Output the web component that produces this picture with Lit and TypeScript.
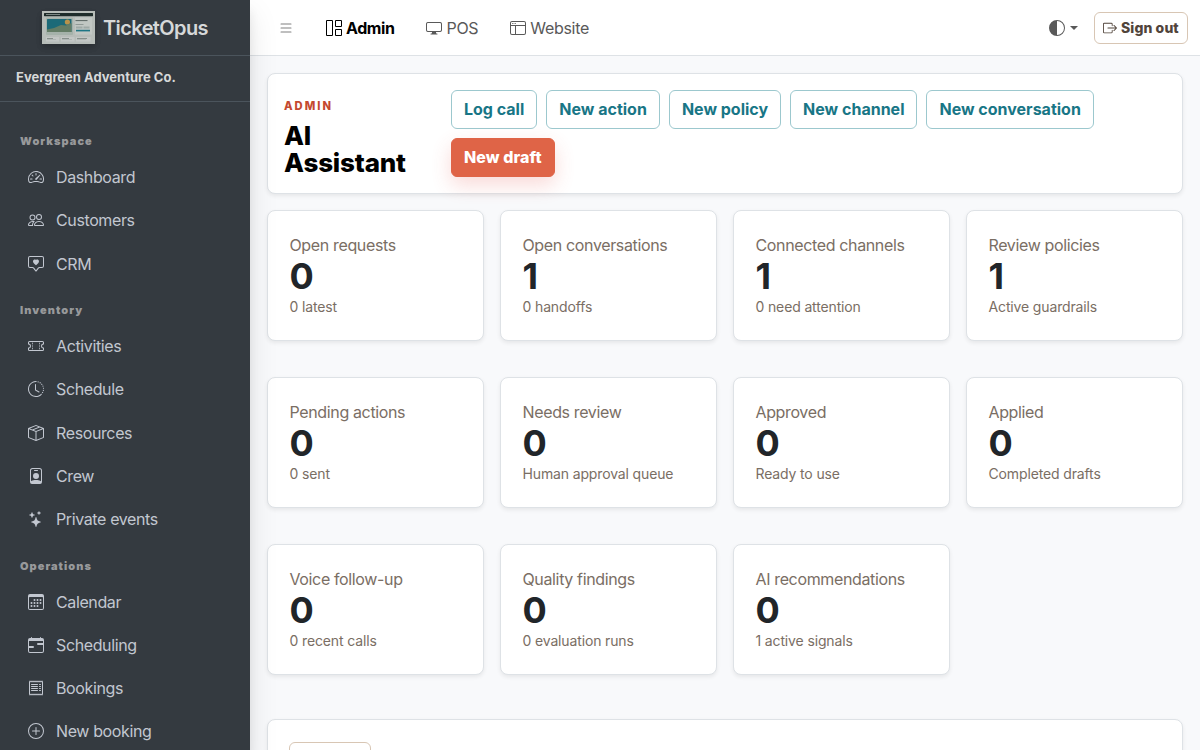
import { LitElement, html, css, svg } from 'lit';
import { customElement, property } from 'lit/decorators.js';

const icons: Record<string, string[]> = {
  speedometer: [
    'M8 4a.5.5 0 0 1 .5.5V6a.5.5 0 0 1-1 0V4.5A.5.5 0 0 1 8 4M3.732 5.732a.5.5 0 0 1 .707 0l.915.914a.5.5 0 1 1-.708.708l-.914-.915a.5.5 0 0 1 0-.707M2 10a.5.5 0 0 1 .5-.5h1.586a.5.5 0 0 1 0 1H2.5A.5.5 0 0 1 2 10m9.5 0a.5.5 0 0 1 .5-.5h1.5a.5.5 0 0 1 0 1H12a.5.5 0 0 1-.5-.5m.754-4.246a.39.39 0 0 0-.527-.02L7.547 9.31a.91.91 0 1 0 1.302 1.258l3.434-4.297a.39.39 0 0 0-.029-.518z',
    'M0 10a8 8 0 1 1 15.547 2.661c-.442 1.253-1.845 1.602-2.932 1.25C11.309 13.488 9.475 13 8 13c-1.474 0-3.31.488-4.615.911-1.087.352-2.49.003-2.932-1.25A8 8 0 0 1 0 10m8-7a7 7 0 0 0-6.603 9.329c.203.575.923.876 1.68.63C4.397 12.533 6.358 12 8 12s3.604.532 4.923.96c.757.245 1.477-.056 1.68-.631A7 7 0 0 0 8 3',
  ],
  people: [
    'M15 14s1 0 1-1-1-4-5-4-5 3-5 4 1 1 1 1zm-7.978-1L7 12.996c.001-.264.167-1.03.76-1.72C8.312 10.629 9.282 10 11 10c1.717 0 2.687.63 3.24 1.276.593.69.758 1.457.76 1.72l-.008.002-.014.002zM11 7a2 2 0 1 0 0-4 2 2 0 0 0 0 4m3-2a3 3 0 1 1-6 0 3 3 0 0 1 6 0M6.936 9.28a6 6 0 0 0-1.23-.247A7 7 0 0 0 5 9c-4 0-5 3-5 4q0 1 1 1h4.216A2.24 2.24 0 0 1 5 13c0-1.01.377-2.042 1.09-2.904.243-.294.526-.569.846-.816M4.92 10A5.5 5.5 0 0 0 4 13H1c0-.26.164-1.03.76-1.724.545-.636 1.492-1.256 3.16-1.275ZM1.5 5.5a3 3 0 1 1 6 0 3 3 0 0 1-6 0m3-2a2 2 0 1 0 0 4 2 2 0 0 0 0-4',
  ],
  chatHeart: [
    'M14 1a1 1 0 0 1 1 1v8a1 1 0 0 1-1 1h-2.5a2 2 0 0 0-1.6.8L8 14.333 6.1 11.8a2 2 0 0 0-1.6-.8H2a1 1 0 0 1-1-1V2a1 1 0 0 1 1-1zM2 0a2 2 0 0 0-2 2v8a2 2 0 0 0 2 2h2.5a1 1 0 0 1 .8.4l1.9 2.533a1 1 0 0 0 1.6 0l1.9-2.533a1 1 0 0 1 .8-.4H14a2 2 0 0 0 2-2V2a2 2 0 0 0-2-2z',
    'M8 3.993c1.664-1.711 5.825 1.283 0 5.132-5.825-3.85-1.664-6.843 0-5.132',
  ],
  ticket: [
    'M4 4.85v.9h1v-.9zm7 0v.9h1v-.9zm-7 1.8v.9h1v-.9zm7 0v.9h1v-.9zm-7 1.8v.9h1v-.9zm7 0v.9h1v-.9zm-7 1.8v.9h1v-.9zm7 0v.9h1v-.9z',
    'M1.5 3A1.5 1.5 0 0 0 0 4.5V6a.5.5 0 0 0 .5.5 1.5 1.5 0 1 1 0 3 .5.5 0 0 0-.5.5v1.5A1.5 1.5 0 0 0 1.5 13h13a1.5 1.5 0 0 0 1.5-1.5V10a.5.5 0 0 0-.5-.5 1.5 1.5 0 0 1 0-3A.5.5 0 0 0 16 6V4.5A1.5 1.5 0 0 0 14.5 3zM1 4.5a.5.5 0 0 1 .5-.5h13a.5.5 0 0 1 .5.5v1.05a2.5 2.5 0 0 0 0 4.9v1.05a.5.5 0 0 1-.5.5h-13a.5.5 0 0 1-.5-.5v-1.05a2.5 2.5 0 0 0 0-4.9z',
  ],
  clock: [
    'M8.515 1.019A7 7 0 0 0 8 1V0a8 8 0 0 1 .589.022zm2.004.45a7 7 0 0 0-.985-.299l.219-.976q.576.129 1.126.342zm1.37.71a7 7 0 0 0-.439-.27l.493-.87a8 8 0 0 1 .979.654l-.615.789a7 7 0 0 0-.418-.302zm1.834 1.79a7 7 0 0 0-.653-.796l.724-.69q.406.429.747.91zm.744 1.352a7 7 0 0 0-.214-.468l.893-.45a8 8 0 0 1 .45 1.088l-.95.313a7 7 0 0 0-.179-.483m.53 2.507a7 7 0 0 0-.1-1.025l.985-.17q.1.58.116 1.17zm-.131 1.538q.05-.254.081-.51l.993.123a8 8 0 0 1-.23 1.155l-.964-.267q.069-.247.12-.501m-.952 2.379q.276-.436.486-.908l.914.405q-.24.54-.555 1.038zm-.964 1.205q.183-.183.35-.378l.758.653a8 8 0 0 1-.401.432z',
    'M8 1a7 7 0 1 0 4.95 11.95l.707.707A8.001 8.001 0 1 1 8 0z',
    'M7.5 3a.5.5 0 0 1 .5.5v5.21l3.248 1.856a.5.5 0 0 1-.496.868l-3.5-2A.5.5 0 0 1 7 9V3.5a.5.5 0 0 1 .5-.5',
  ],
  box: [
    'M8.186 1.113a.5.5 0 0 0-.372 0L1.846 3.5l2.404.961L10.404 2zm3.564 1.426L5.596 5 8 5.961 14.154 3.5zm3.25 1.7-6.5 2.6v7.922l6.5-2.6V4.24zM7.5 14.762V6.838L1 4.239v7.923zM7.443.184a1.5 1.5 0 0 1 1.114 0l7.129 2.852A.5.5 0 0 1 16 3.5v8.662a1 1 0 0 1-.629.928l-7.185 2.874a.5.5 0 0 1-.372 0L.63 13.09a1 1 0 0 1-.63-.928V3.5a.5.5 0 0 1 .314-.464z',
  ],
  badge: [
    'M6.5 2a.5.5 0 0 0 0 1h3a.5.5 0 0 0 0-1zM11 8a3 3 0 1 1-6 0 3 3 0 0 1 6 0',
    'M4.5 0A2.5 2.5 0 0 0 2 2.5V14a2 2 0 0 0 2 2h8a2 2 0 0 0 2-2V2.5A2.5 2.5 0 0 0 11.5 0zM3 2.5A1.5 1.5 0 0 1 4.5 1h7A1.5 1.5 0 0 1 13 2.5v10.795a4.2 4.2 0 0 0-.776-.492C11.392 12.387 10.063 12 8 12s-3.392.387-4.224.803a4.2 4.2 0 0 0-.776.492z',
  ],
  stars: [
    'M7.657 6.247c.11-.33.576-.33.686 0l.645 1.937a2.89 2.89 0 0 0 1.829 1.828l1.936.645c.33.11.33.576 0 .686l-1.937.645a2.89 2.89 0 0 0-1.828 1.829l-.645 1.936a.361.361 0 0 1-.686 0l-.645-1.937a2.89 2.89 0 0 0-1.828-1.828l-1.937-.645a.361.361 0 0 1 0-.686l1.937-.645a2.89 2.89 0 0 0 1.828-1.828zM3.794 1.148a.217.217 0 0 1 .412 0l.387 1.162c.173.518.579.924 1.097 1.097l1.162.387a.217.217 0 0 1 0 .412l-1.162.387A1.73 1.73 0 0 0 4.593 5.69l-.387 1.162a.217.217 0 0 1-.412 0L3.407 5.69A1.73 1.73 0 0 0 2.31 4.593l-1.162-.387a.217.217 0 0 1 0-.412l1.162-.387A1.73 1.73 0 0 0 3.407 2.31zM10.863.099a.145.145 0 0 1 .274 0l.258.774c.115.346.386.617.732.732l.774.258a.145.145 0 0 1 0 .274l-.774.258a1.16 1.16 0 0 0-.732.732l-.258.774a.145.145 0 0 1-.274 0l-.258-.774a1.16 1.16 0 0 0-.732-.732L9.1 2.137a.145.145 0 0 1 0-.274l.774-.258c.346-.115.617-.386.732-.732z',
  ],
  calendar: [
    'M14 0H2a2 2 0 0 0-2 2v12a2 2 0 0 0 2 2h12a2 2 0 0 0 2-2V2a2 2 0 0 0-2-2M1 3.857C1 3.384 1.448 3 2 3h12c.552 0 1 .384 1 .857v10.286c0 .473-.448.857-1 .857H2c-.552 0-1-.384-1-.857z',
    'M6.5 7a1 1 0 1 0 0-2 1 1 0 0 0 0 2m3 0a1 1 0 1 0 0-2 1 1 0 0 0 0 2m3 0a1 1 0 1 0 0-2 1 1 0 0 0 0 2m-9 3a1 1 0 1 0 0-2 1 1 0 0 0 0 2m3 0a1 1 0 1 0 0-2 1 1 0 0 0 0 2m3 0a1 1 0 1 0 0-2 1 1 0 0 0 0 2m3 0a1 1 0 1 0 0-2 1 1 0 0 0 0 2m-9 3a1 1 0 1 0 0-2 1 1 0 0 0 0 2m3 0a1 1 0 1 0 0-2 1 1 0 0 0 0 2m3 0a1 1 0 1 0 0-2 1 1 0 0 0 0 2',
  ],
  calendarRange: [
    'M9 7a1 1 0 0 1 1-1h5v2h-5a1 1 0 0 1-1-1M1 9h4a1 1 0 0 1 0 2H1z',
    'M3.5 0a.5.5 0 0 1 .5.5V1h8V.5a.5.5 0 0 1 1 0V1h1a2 2 0 0 1 2 2v11a2 2 0 0 1-2 2H2a2 2 0 0 1-2-2V3a2 2 0 0 1 2-2h1V.5a.5.5 0 0 1 .5-.5M1 4v10a1 1 0 0 0 1 1h12a1 1 0 0 0 1-1V4z',
  ],
  receipt: [
    'M1.92.506a.5.5 0 0 1 .434.14L3 1.293l.646-.647a.5.5 0 0 1 .708 0L5 1.293l.646-.647a.5.5 0 0 1 .708 0L7 1.293l.646-.647a.5.5 0 0 1 .708 0L9 1.293l.646-.647a.5.5 0 0 1 .708 0l.646.647.646-.647a.5.5 0 0 1 .708 0l.646.647.646-.647a.5.5 0 0 1 .801.13l.5 1A.5.5 0 0 1 15 2v12a.5.5 0 0 1-.053.224l-.5 1a.5.5 0 0 1-.8.13L13 14.707l-.646.647a.5.5 0 0 1-.708 0L11 14.707l-.646.647a.5.5 0 0 1-.708 0L9 14.707l-.646.647a.5.5 0 0 1-.708 0L7 14.707l-.646.647a.5.5 0 0 1-.708 0L5 14.707l-.646.647a.5.5 0 0 1-.708 0L3 14.707l-.646.647a.5.5 0 0 1-.801-.13l-.5-1A.5.5 0 0 1 1 14V2a.5.5 0 0 1 .053-.224l.5-1a.5.5 0 0 1 .367-.27m.217 1.338L2 2.118v11.764l.137.274.51-.51a.5.5 0 0 1 .707 0l.646.647.646-.646a.5.5 0 0 1 .708 0l.646.646.646-.646a.5.5 0 0 1 .708 0l.646.646.646-.646a.5.5 0 0 1 .708 0l.646.646.646-.646a.5.5 0 0 1 .708 0l.646.646.646-.646a.5.5 0 0 1 .708 0l.509.509.137-.274V2.118l-.137-.274-.51.51a.5.5 0 0 1-.707 0L12 1.707l-.646.647a.5.5 0 0 1-.708 0L10 1.707l-.646.647a.5.5 0 0 1-.708 0L8 1.707l-.646.647a.5.5 0 0 1-.708 0L6 1.707l-.646.647a.5.5 0 0 1-.708 0L4 1.707l-.646.647a.5.5 0 0 1-.708 0z',
    'M3 4.5a.5.5 0 0 1 .5-.5h6a.5.5 0 1 1 0 1h-6a.5.5 0 0 1-.5-.5m0 2a.5.5 0 0 1 .5-.5h6a.5.5 0 1 1 0 1h-6a.5.5 0 0 1-.5-.5m0 2a.5.5 0 0 1 .5-.5h6a.5.5 0 1 1 0 1h-6a.5.5 0 0 1-.5-.5m0 2a.5.5 0 0 1 .5-.5h6a.5.5 0 0 1 0 1h-6a.5.5 0 0 1-.5-.5m8-6a.5.5 0 0 1 .5-.5h1a.5.5 0 0 1 0 1h-1a.5.5 0 0 1-.5-.5m0 2a.5.5 0 0 1 .5-.5h1a.5.5 0 0 1 0 1h-1a.5.5 0 0 1-.5-.5m0 2a.5.5 0 0 1 .5-.5h1a.5.5 0 0 1 0 1h-1a.5.5 0 0 1-.5-.5m0 2a.5.5 0 0 1 .5-.5h1a.5.5 0 0 1 0 1h-1a.5.5 0 0 1-.5-.5',
  ],
  plusCircle: [
    'M8 15A7 7 0 1 1 8 1a7 7 0 0 1 0 14m0 1A8 8 0 1 0 8 0a8 8 0 0 0 0 16',
    'M8 4a.5.5 0 0 1 .5.5v3h3a.5.5 0 0 1 0 1h-3v3a.5.5 0 0 1-1 0v-3h-3a.5.5 0 0 1 0-1h3v-3A.5.5 0 0 1 8 4',
  ],
  list: [
    'M2.5 12a.5.5 0 0 1 .5-.5h10a.5.5 0 0 1 0 1H3a.5.5 0 0 1-.5-.5m0-4a.5.5 0 0 1 .5-.5h10a.5.5 0 0 1 0 1H3a.5.5 0 0 1-.5-.5m0-4a.5.5 0 0 1 .5-.5h10a.5.5 0 0 1 0 1H3a.5.5 0 0 1-.5-.5',
  ],
  grid: [
    'M6 1H1v14h5zm9 0h-5v5h5zm0 9v5h-5v-5zM0 1a1 1 0 0 1 1-1h5a1 1 0 0 1 1 1v14a1 1 0 0 1-1 1H1a1 1 0 0 1-1-1zm9 0a1 1 0 0 1 1-1h5a1 1 0 0 1 1 1v5a1 1 0 0 1-1 1h-5a1 1 0 0 1-1-1zm1 8a1 1 0 0 0-1 1v5a1 1 0 0 0 1 1h5a1 1 0 0 0 1-1v-5a1 1 0 0 0-1-1z',
  ],
  display: [
    'M0 4s0-2 2-2h12s2 0 2 2v6s0 2-2 2h-4q0 1 .25 1.5H11a.5.5 0 0 1 0 1H5a.5.5 0 0 1 0-1h.75Q6 13 6 12H2s-2 0-2-2zm1.398-.855a.76.76 0 0 0-.254.302A1.5 1.5 0 0 0 1 4.01V10c0 .325.078.502.145.602q.105.156.302.254a1.5 1.5 0 0 0 .538.143L2.01 11H14c.325 0 .502-.078.602-.145a.76.76 0 0 0 .254-.302 1.5 1.5 0 0 0 .143-.538L15 9.99V4c0-.325-.078-.502-.145-.602a.76.76 0 0 0-.302-.254A1.5 1.5 0 0 0 13.99 3H2c-.325 0-.502.078-.602.145',
  ],
  window: [
    'M2.5 4a.5.5 0 1 0 0-1 .5.5 0 0 0 0 1m2-.5a.5.5 0 1 1-1 0 .5.5 0 0 1 1 0m1 .5a.5.5 0 1 0 0-1 .5.5 0 0 0 0 1',
    'M2 1a2 2 0 0 0-2 2v10a2 2 0 0 0 2 2h12a2 2 0 0 0 2-2V3a2 2 0 0 0-2-2zm12 1a1 1 0 0 1 1 1v2H1V3a1 1 0 0 1 1-1zM1 13V6h4v8H2a1 1 0 0 1-1-1m5 1V6h9v7a1 1 0 0 1-1 1z',
  ],
  contrast: ['M8 15A7 7 0 1 0 8 1zm0 1A8 8 0 1 1 8 0a8 8 0 0 1 0 16'],
  signOut: [
    'M10 12.5a.5.5 0 0 1-.5.5h-8a.5.5 0 0 1-.5-.5v-9a.5.5 0 0 1 .5-.5h8a.5.5 0 0 1 .5.5v2a.5.5 0 0 0 1 0v-2A1.5 1.5 0 0 0 9.5 2h-8A1.5 1.5 0 0 0 0 3.5v9A1.5 1.5 0 0 0 1.5 14h8a1.5 1.5 0 0 0 1.5-1.5v-2a.5.5 0 0 0-1 0z',
    'M15.854 8.354a.5.5 0 0 0 0-.708l-3-3a.5.5 0 0 0-.708.708L14.293 7.5H5.5a.5.5 0 0 0 0 1h8.793l-2.147 2.146a.5.5 0 0 0 .708.708z',
  ],
};

@customElement('app-icon')
export class Icon extends LitElement {
  @property() name = '';

  static styles = css`
    :host {
      display: inline-flex;
      flex: none;
      width: 16px;
      height: 16px;
    }

    svg {
      width: 100%;
      height: 100%;
      fill: currentColor;
    }
  `;

  render() {
    const paths = icons[this.name] ?? [];
    return html`
      <svg viewBox="0 0 16 16" aria-hidden="true">
        ${paths.map((d) => svg`<path fill-rule="evenodd" d=${d}></path>`)}
      </svg>
    `;
  }
}

@customElement('app-sidebar')
export class Sidebar extends LitElement {
  groups = [
    {
      label: 'Workspace',
      items: [
        { icon: 'speedometer', label: 'Dashboard' },
        { icon: 'people', label: 'Customers' },
        { icon: 'chatHeart', label: 'CRM' },
      ],
    },
    {
      label: 'Inventory',
      items: [
        { icon: 'ticket', label: 'Activities' },
        { icon: 'clock', label: 'Schedule' },
        { icon: 'box', label: 'Resources' },
        { icon: 'badge', label: 'Crew' },
        { icon: 'stars', label: 'Private events' },
      ],
    },
    {
      label: 'Operations',
      items: [
        { icon: 'calendar', label: 'Calendar' },
        { icon: 'calendarRange', label: 'Scheduling' },
        { icon: 'receipt', label: 'Bookings' },
        { icon: 'plusCircle', label: 'New booking' },
      ],
    },
  ];

  static styles = css`
    :host {
      display: flex;
      flex-direction: column;
      height: 100%;
      background: #343a40;
      color: #c2c7d0;
    }

    .brand {
      display: flex;
      flex: none;
      align-items: center;
      justify-content: center;
      gap: 8px;
      box-sizing: border-box;
      height: 56px;
      border-bottom: 1px solid #4b545c;
      color: #d6d8d9;
      font-size: 20px;
      font-weight: 600;
      letter-spacing: -0.6px;
    }

    .logo {
      width: 53px;
      height: 33px;
      opacity: 0.92;
      box-shadow: 0 3px 6px rgba(0, 0, 0, 0.12), 0 3px 6px rgba(0, 0, 0, 0.12);
    }

    .company {
      flex: none;
      box-sizing: border-box;
      height: 46px;
      padding: 0 16px;
      border-bottom: 1px solid #4b545c;
      color: #d6d8d9;
      font-size: 13px;
      font-weight: 700;
      line-height: 43px;
    }

    nav {
      min-height: 0;
      overflow: hidden;
      padding: 20.23px 8px 0;
    }

    .label {
      height: 33.45px;
      padding-left: 12px;
      box-sizing: border-box;
      padding-top: 8px;
      color: #98999b;
      font-size: 11px;
      font-weight: 900;
      letter-spacing: 1.05px;
      line-height: 22px;
    }

    .group {
      margin-bottom: 6px;
    }

    .item {
      display: flex;
      align-items: center;
      gap: 12px;
      height: 43.2px;
      padding-left: 20px;
      letter-spacing: -0.38px;
      line-height: 24px;
    }
  `;

  render() {
    return html`
      <div class="brand">
        <svg class="logo" viewBox="0 0 53 33" aria-hidden="true">
          <rect width="53" height="33" fill="#c3c9c4"></rect>
          <rect x="2" y="2" width="49" height="3.2" rx=".6" fill="#1d2b29"></rect>
          <rect x="4" y="3.2" width="14" height=".8" fill="#9aa5a1"></rect>
          <rect x="4" y="6.5" width="27" height="17.5" rx="1" fill="#afbdb4"></rect>
          <rect x="5" y="8" width="24.5" height="13" rx=".6" fill="#1b6f7d"></rect>
          <circle cx="25.4" cy="11" r="2.6" fill="#c49a4c"></circle>
          <path d="M5 18.5 12 17 19 14 24 14.5 29.5 12V21H5z" fill="#678269"></path>
          <rect x="33" y="6.5" width="17" height="17" fill="#cdd3cf"></rect>
          <rect x="33.5" y="9" width="12" height="1.1" fill="#68736f"></rect>
          <rect x="33.5" y="13" width="8" height=".8" fill="#8b9692"></rect>
          <rect x="34" y="15.5" width="6.5" height="2" fill="#a9b4af"></rect>
          <rect x="41.5" y="15.5" width="6" height="2" fill="#a9b4af"></rect>
          <rect x="34" y="18.8" width="14" height="1.6" fill="#1b7a8a"></rect>
          <rect x="4" y="26" width="13" height="4.5" fill="#d0d4d1"></rect>
          <rect x="19" y="26" width="13.5" height="4.5" fill="#d0d4d1"></rect>
          <rect x="34" y="26" width="14.5" height="4.5" fill="#d0d4d1"></rect>
          <rect x="5" y="27" width="6" height=".8" fill="#7d8783"></rect>
          <rect x="20" y="27" width="7" height=".8" fill="#7d8783"></rect>
          <rect x="35" y="27" width="10" height=".8" fill="#7d8783"></rect>
          <rect x="5" y="28.5" width="9" height=".5" fill="#a5afab"></rect>
          <rect x="20" y="28.5" width="10" height=".5" fill="#a5afab"></rect>
          <rect x="35" y="28.5" width="9" height=".5" fill="#a5afab"></rect>
        </svg>
        <span>TicketOpus</span>
      </div>
      <div class="company">Evergreen Adventure Co.</div>
      <nav>
        ${this.groups.map((group) => html`
          <div class="group">
            <div class="label">${group.label}</div>
            ${group.items.map((item) => html`
              <div class="item">
                <app-icon name=${item.icon}></app-icon>
                <span>${item.label}</span>
              </div>
            `)}
          </div>
        `)}
      </nav>
    `;
  }
}

@customElement('app-topbar')
export class Topbar extends LitElement {
  static styles = css`
    :host {
      display: flex;
      align-items: center;
      box-sizing: border-box;
      height: 56px;
      padding: 0 12px 0 28px;
      border-bottom: 1px solid #dee2e6;
      background: #fff;
      color: #595959;
      letter-spacing: -0.3px;
      line-height: 24px;
    }

    .menu {
      color: #808080;
    }

    .link {
      display: flex;
      align-items: center;
      gap: 4px;
      margin-left: 32px;
    }

    .link.active {
      color: #000;
      font-weight: 700;
      letter-spacing: -0.42px;
    }

    .theme {
      display: flex;
      align-items: center;
      gap: 5px;
      margin-left: auto;
    }

    .caret {
      border-top: 4.5px solid currentColor;
      border-left: 4.5px solid transparent;
      border-right: 4.5px solid transparent;
    }

    button {
      display: flex;
      align-items: center;
      gap: 4px;
      box-sizing: border-box;
      width: 94px;
      height: 32px;
      margin-left: 16px;
      padding: 0 8px;
      border: 1px solid #d8c6b4;
      border-radius: 6px;
      background: #fff;
      color: #51443b;
      font: inherit;
      font-size: 14px;
      font-weight: 800;
      letter-spacing: 0.1px;
      white-space: nowrap;
    }

    button app-icon {
      width: 14px;
      height: 14px;
    }
  `;

  render() {
    return html`
      <app-icon class="menu" name="list"></app-icon>
      <div class="link active"><app-icon name="grid"></app-icon>Admin</div>
      <div class="link"><app-icon name="display"></app-icon>POS</div>
      <div class="link"><app-icon name="window"></app-icon>Website</div>
      <div class="theme">
        <app-icon name="contrast"></app-icon>
        <span class="caret"></span>
      </div>
      <button><app-icon name="signOut"></app-icon>Sign out</button>
    `;
  }
}

@customElement('stat-card')
export class StatCard extends LitElement {
  @property() label = '';
  @property() value = '';
  @property() note = '';

  static styles = css`
    :host {
      display: block;
      box-sizing: border-box;
      height: 131px;
      padding: 22px 21.5px;
      border: 1px solid #dee2e6;
      border-radius: 8px;
      background: #fff;
      box-shadow: 0 2px 4px rgba(0, 0, 0, 0.075);
      color: #7a6e64;
    }

    .label {
      letter-spacing: -0.36px;
      line-height: 24px;
    }

    .value {
      color: #212529;
      font-size: 36px;
      font-weight: 700;
      letter-spacing: -0.5px;
      line-height: 39px;
    }

    .note {
      font-size: 14px;
      letter-spacing: -0.14px;
      line-height: 21px;
    }
  `;

  render() {
    return html`
      <div class="label">${this.label}</div>
      <div class="value">${this.value}</div>
      <div class="note">${this.note}</div>
    `;
  }
}

@customElement('app-root')
export class Root extends LitElement {
  actions = ['Log call', 'New action', 'New policy', 'New channel', 'New conversation'];

  stats = [
    ['Open requests', '0', '0 latest'],
    ['Open conversations', '1', '0 handoffs'],
    ['Connected channels', '1', '0 need attention'],
    ['Review policies', '1', 'Active guardrails'],
    ['Pending actions', '0', '0 sent'],
    ['Needs review', '0', 'Human approval queue'],
    ['Approved', '0', 'Ready to use'],
    ['Applied', '0', 'Completed drafts'],
    ['Voice follow-up', '0', '0 recent calls'],
    ['Quality findings', '0', '0 evaluation runs'],
    ['AI recommendations', '0', '1 active signals'],
  ];

  static styles = css`
    :host {
      display: grid;
      grid-template-columns: 250px 1fr;
      height: 750px;
      overflow: hidden;
      background: #f8f9fb;
      font-family: Inter, 'Liberation Sans', sans-serif;
      font-size: 16px;
    }

    app-sidebar {
      position: relative;
      z-index: 1;
      box-shadow: 0 14px 28px rgba(0, 0, 0, 0.1), 0 10px 10px rgba(0, 0, 0, 0.07);
    }

    .page {
      min-width: 0;
      height: 750px;
      overflow: hidden;
    }

    main {
      padding: 17px 17px 0;
    }

    .hero,
    .panel {
      box-sizing: border-box;
      border: 1px solid #dee2e6;
      border-radius: 8px;
      background: #fff;
      box-shadow: 0 2px 4px rgba(0, 0, 0, 0.075);
    }

    .hero {
      display: flex;
      align-items: center;
      height: 121px;
      margin-bottom: 16px;
      padding: 16px;
    }

    .title {
      flex: none;
      width: 167px;
      padding-top: 7px;
    }

    .eyebrow {
      color: #c4492f;
      font-size: 11.2px;
      font-weight: 800;
      letter-spacing: 2px;
      line-height: 16px;
      margin-bottom: 8px;
    }

    h1 {
      width: 130px;
      margin: 0;
      color: #000;
      font-size: 26px;
      font-weight: 800;
      letter-spacing: -0.18px;
      line-height: 27px;
    }

    .actions {
      display: flex;
      flex-wrap: wrap;
      gap: 9px;
    }

    .btn {
      box-sizing: border-box;
      height: 39px;
      padding: 0 12px 2px;
      border: 1px solid #9cc8ce;
      border-radius: 6px;
      background: #fff;
      color: #187686;
      font: inherit;
      font-weight: 700;
    }

    .btn.primary {
      border-color: #df6447;
      background: #df6447;
      box-shadow: 0 8px 20px rgba(223, 70, 60, 0.2);
      color: #fff;
      font-weight: 800;
      letter-spacing: 0.08px;
    }

    .stats {
      display: grid;
      grid-template-columns: repeat(4, 217px);
      column-gap: 16px;
      row-gap: 36px;
    }

    .panel {
      height: 120px;
      margin-top: 44px;
      padding: 22px 21px;
    }

    .filter {
      width: 82px;
      height: 36px;
      border: 1px solid #d8c6b4;
      border-radius: 6px;
      box-sizing: border-box;
    }
  `;

  render() {
    return html`
      <app-sidebar></app-sidebar>
      <div class="page">
        <app-topbar></app-topbar>
        <main>
          <section class="hero">
            <div class="title">
              <div class="eyebrow">ADMIN</div>
              <h1>AI Assistant</h1>
            </div>
            <div class="actions">
              ${this.actions.map((action) => html`<button class="btn">${action}</button>`)}
              <button class="btn primary">New draft</button>
            </div>
          </section>
          <section class="stats">
            ${this.stats.map(([label, value, note]) => html`
              <stat-card label=${label} value=${value} note=${note}></stat-card>
            `)}
          </section>
          <section class="panel">
            <div class="filter"></div>
          </section>
        </main>
      </div>
    `;
  }
}
